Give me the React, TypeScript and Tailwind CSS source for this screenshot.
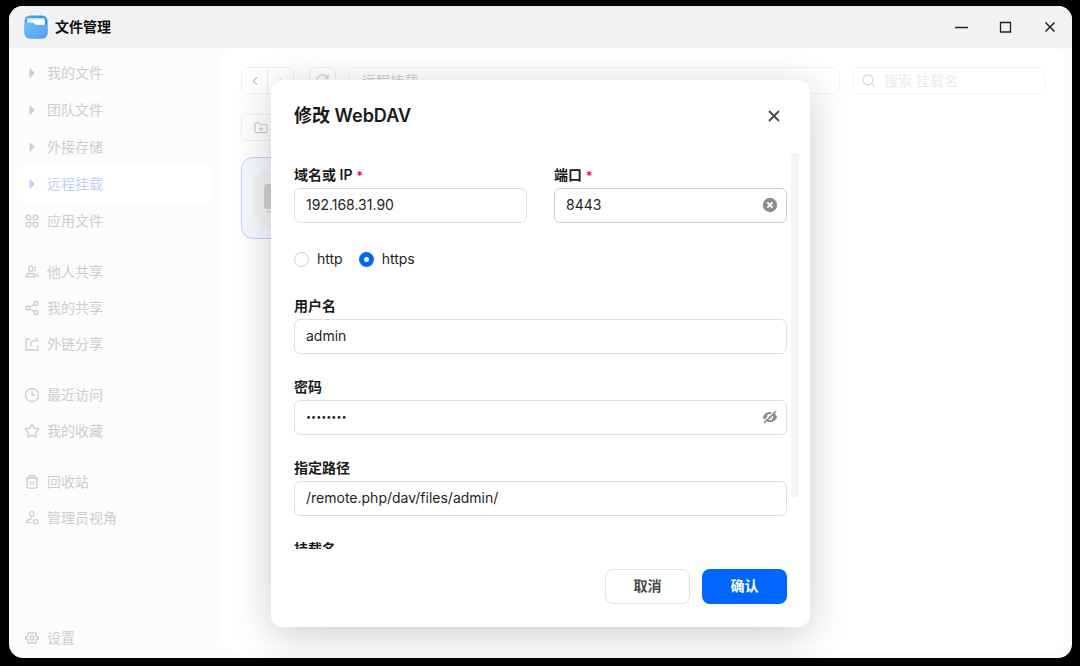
import React, { useState } from 'react';
import { ChevronLeft, ChevronRight, FolderPlus, RotateCw, Search, Star, X } from 'lucide-react';

interface NavItem {
    id: string;
    label: string;
    icon: React.ReactNode;
}

interface FieldProps {
    id: string;
    label: string;
    value: string;
    onChange: (value: string) => void;
    type?: string;
    required?: boolean;
    active?: boolean;
    suffix?: React.ReactNode;
}

const Line: React.FC<{ children: React.ReactNode }> = ({ children }) => (
    <svg width="16" height="16" viewBox="0 0 16 16" fill="none" stroke="currentColor" strokeWidth="1.3" className="shrink-0" aria-hidden="true">
        {children}
    </svg>
);

const Caret = () => (
    <svg width="16" height="16" viewBox="0 0 16 16" fill="currentColor" className="shrink-0" aria-hidden="true">
        <path d="M5.500 3.900c0-.5.5-.6.8-.3l4 4c.3.300.3.600 0 .9l-4 4c-.3.3-.8.2-.8-.3z" />
    </svg>
);

const AppLogo = () => (
    <svg width="24" height="24" viewBox="0 0 24 24" className="shrink-0" aria-hidden="true">
        <defs>
            <linearGradient id="logo-back" x1="0" y1="0" x2="1" y2="0">
                <stop offset="0" stopColor="#38b0fb" />
                <stop offset="1" stopColor="#2a8df0" />
            </linearGradient>
            <linearGradient id="logo-front" x1="0" y1="0" x2="1" y2="1">
                <stop offset="0" stopColor="#6cc0fb" />
                <stop offset="1" stopColor="#559bf0" />
            </linearGradient>
        </defs>
        <rect x="0.5" y="0.5" width="23" height="23" rx="5.5" fill="url(#logo-back)" />
        <path d="M3 4.6c0-1 .6-1.600 1.600-1.600h14.800c1 0 1.600.600 1.600 1.600V12H3z" fill="#bfe3fd" />
        <path d="M3.400 6c0-.8.500-1.200 1.200-1.200h15c.7 0 1.200.4 1.200 1.200v6H3.400z" fill="#fff" />
        <path d="M.5 8.600c0-.8.500-1.200 1.200-1.200h7c1.500 0 1.900 2.300 3.600 2.300h9.900c.8 0 1.300.4 1.300 1.200V18a5.500 5.500 0 0 1-5.500 5.500H6A5.500 5.500 0 0 1 .5 18z" fill="url(#logo-front)" />
    </svg>
);

const navGroups: NavItem[][] = [
    [
        { id: 'mine', label: '我的文件', icon: <Caret /> },
        { id: 'team', label: '团队文件', icon: <Caret /> },
        { id: 'external', label: '外接存储', icon: <Caret /> },
        { id: 'remote', label: '远程挂载', icon: <Caret /> },
        {
            id: 'apps',
            label: '应用文件',
            icon: (
                <Line>
                    <path d="M6.700 6.700H4.400a2.300 2.300 0 1 1 2.300-2.300zM9.300 6.700h2.300a2.300 2.300 0 1 0-2.300-2.300zM6.700 9.300H4.400a2.300 2.300 0 1 0 2.300 2.300zM9.300 9.300h2.300a2.300 2.300 0 1 1-2.300 2.300z" />
                </Line>
            )
        }
    ],
    [
        {
            id: 'others',
            label: '他人共享',
            icon: (
                <Line>
                    <ellipse cx="6.700" cy="4.800" rx="2.200" ry="2.600" />
                    <path d="M10 2.400c1.800.6 1.800 4.200 0 4.800M2 12.900c0-2.400 1.900-3.400 4.700-3.400s4.700 1 4.700 3.400zM12 9.800c1.400.5 2 1.500 2.100 3.100" />
                </Line>
            )
        },
        {
            id: 'my-share',
            label: '我的共享',
            icon: (
                <Line>
                    <circle cx="3.700" cy="8" r="2" />
                    <circle cx="11.800" cy="3.500" r="2" />
                    <circle cx="11.800" cy="12.500" r="2" />
                    <path d="m5.500 7 4.500-2.500M5.500 9l4.500 2.500" />
                </Line>
            )
        },
        {
            id: 'link-share',
            label: '外链分享',
            icon: (
                <Line>
                    <path d="M6 3H2v11h12V9M6.800 10V7.500c0-1.700 1-2.700 2.700-2.700H14M11.200 2 14 4.800" />
                </Line>
            )
        }
    ],
    [
        {
            id: 'recent',
            label: '最近访问',
            icon: (
                <Line>
                    <circle cx="8" cy="8" r="6.500" />
                    <path d="M8 4v4h3" />
                </Line>
            )
        },
        { id: 'favorite', label: '我的收藏', icon: <Star size={16} strokeWidth={1.9} className="shrink-0" /> }
    ],
    [
        {
            id: 'trash',
            label: '回收站',
            icon: (
                <Line>
                    <path d="M1.800 4h12.400M5.200 4V1.600h5.600V4M3.200 4v8.700c0 .9.500 1.400 1.400 1.400h6.800c.9 0 1.400-.5 1.400-1.400V4M6.600 7v4M9.400 7v4" />
                </Line>
            )
        },
        {
            id: 'admin',
            label: '管理员视角',
            icon: (
                <Line>
                    <ellipse cx="7.800" cy="4" rx="2" ry="2.600" />
                    <path d="M7.800 9c-3.300 0-5.200 1.200-5.400 3.700h5.200" />
                    <circle cx="11.700" cy="11.500" r="2.200" />
                </Line>
            )
        }
    ]
];

const Field: React.FC<FieldProps> = ({ id, label, value, onChange, type = 'text', required, active, suffix }) => (
    <div className="flex min-w-0 flex-1 flex-col gap-[3px]">
        <label htmlFor={id} className="text-sm leading-5 font-semibold text-[#1a1a1a]">
            {label}
            {required && <span className="ml-1 align-middle text-xs leading-none text-[#f5002d]">*</span>}
        </label>
        <div className={`flex h-[35px] items-center rounded-md border pr-2 pl-[11px] ${active ? 'border-[#cacaca]' : 'border-[#dedede]'}`}>
            <input
                id={id}
                type={type}
                value={value}
                onChange={(e) => onChange(e.target.value)}
                className={`min-w-0 flex-1 bg-transparent text-[#1f1f1f] outline-none ${type === 'password' ? 'text-[9px]' : 'text-sm'}`}
            />
            {suffix}
        </div>
    </div>
);

const App: React.FC = () => {
    const [host, setHost] = useState('192.168.31.90');
    const [port, setPort] = useState('8443');
    const [protocol, setProtocol] = useState('https');
    const [user, setUser] = useState('admin');
    const [password, setPassword] = useState('password');
    const [showPassword, setShowPassword] = useState(false);
    const [path, setPath] = useState('/remote.php/dav/files/admin/');
    const [mountName, setMountName] = useState('');

    return (
        <div className="flex h-screen flex-col bg-black pt-[6px] pr-2 pb-2 pl-[9px] font-['Inter','Noto_Sans_CJK_SC',sans-serif] text-sm">
            <div className="flex min-h-0 flex-1 flex-col overflow-hidden rounded-[14px] bg-[#fcfcfc]">
                {/* Шапка окна */}
                <header className="flex h-[42px] shrink-0 items-center justify-between bg-[#f1f2f4] pr-[14px] pl-[15px]">
                    <div className="flex items-center gap-[7px]">
                        <AppLogo />
                        <h1 className="font-semibold text-[#111]">文件管理</h1>
                    </div>
                    <div className="flex items-center gap-7 text-[#222]">
                        <button aria-label="最小化">
                            <svg width="16" height="16" viewBox="0 0 16 16" stroke="currentColor" strokeWidth="1.300"><path d="M1 8.500h13" /></svg>
                        </button>
                        <button aria-label="最大化">
                            <svg width="16" height="16" viewBox="0 0 16 16" fill="none" stroke="currentColor" strokeWidth="1.300"><path d="M2.500 3.500h10v9.500h-10z" /></svg>
                        </button>
                        <button aria-label="关闭">
                            <svg width="16" height="16" viewBox="0 0 16 16" stroke="currentColor" strokeWidth="1.500"><path d="m3.500 3.500 9 9M12.500 3.500l-9 9" /></svg>
                        </button>
                    </div>
                </header>

                <div className="relative flex min-h-0 flex-1">
                    {/* Боковое меню */}
                    <aside className="flex w-[212px] shrink-0 flex-col text-[#cdcdcd]">
                        <nav className="flex min-h-0 flex-1 flex-col gap-[15px] overflow-hidden px-2 pt-[7px]">
                            {navGroups.map((group, idx) => (
                                <div key={idx} className={`flex flex-col ${idx === 0 ? 'gap-px' : ''}`}>
                                    {group.map((item) => (
                                        <button
                                            key={item.id}
                                            className={`flex h-9 items-center gap-[7px] rounded-md px-[7px] text-left ${
                                                item.id === 'remote' ? 'bg-white text-[#c0cfff]' : ''
                                            }`}
                                        >
                                            {item.icon}
                                            <span>{item.label}</span>
                                        </button>
                                    ))}
                                </div>
                            ))}
                        </nav>
                        <div className="shrink-0 border-t border-[#f7f7f7] px-2 pb-[2px]">
                            <button className="flex h-9 w-full items-center gap-[7px] px-[7px] text-left">
                                <Line>
                                    <path d="M5.900 2.300 7 3.300h2l1.100-1 1.900 1.100-.3 1.500 1 1.700 1.500.4v2l-1.500.4-1 1.700.3 1.500-1.900 1.100-1.100-1H7l-1.100 1L4 12.600l.3-1.500-1-1.700L1.800 9V7l1.500-.4 1-1.700L4 3.400z" strokeLinejoin="round" />
                                    <circle cx="8" cy="8" r="1.900" />
                                </Line>
                                <span>设置</span>
                            </button>
                        </div>
                    </aside>

                    {/* Содержимое */}
                    <main className="mr-[7px] mb-2 flex min-w-0 flex-1 flex-col rounded-xl bg-white px-5 pt-[19px] text-[#cfcfcf]">
                        <div className="flex h-[27px] items-stretch gap-3">
                            <div className="flex w-[53px] rounded-md border border-[#f0f0f0]">
                                <button aria-label="后退" className="flex flex-1 items-center justify-center border-r border-[#f0f0f0]">
                                    <ChevronLeft size={14} className="text-[#c4c4c4]" />
                                </button>
                                <button aria-label="前进" className="flex flex-1 items-center justify-center">
                                    <ChevronRight size={14} className="text-[#ececec]" />
                                </button>
                            </div>
                            <button aria-label="刷新" className="ml-[3px] flex w-[27px] items-center justify-center rounded-md border border-[#f0f0f0]">
                                <RotateCw size={15} strokeWidth={1.8} />
                            </button>
                            <div className="flex min-w-0 flex-1 items-center rounded-md border border-[#f3f3f3] px-[13px]">远程挂载</div>
                            <label className="flex w-[193px] items-center gap-2 rounded-md border border-[#f3f3f3] px-2">
                                <Search size={15} strokeWidth={1.800} className="shrink-0 text-[#d4d4d4]" />
                                <input aria-label="搜索" placeholder="搜索 挂载名" className="min-w-0 flex-1 bg-transparent outline-none placeholder:text-[#ebebeb]" />
                            </label>
                        </div>
                        <button aria-label="添加挂载" className="mt-5 flex h-[27px] items-center self-start rounded-md border border-[#f0f0f0] px-3">
                            <FolderPlus size={14} />
                        </button>
                        <div className="mt-4 flex h-[82px] w-60 items-center rounded-xl border border-[#c4d3ff] bg-[#f5f8ff] px-3">
                            <div className="flex h-14 w-14 items-center justify-center rounded-xl bg-[#f3f4f6]">
                                <svg width="36" height="36" viewBox="0 0 36 36" fill="#d2d2d2" aria-hidden="true">
                                    <path fillRule="evenodd" d="M3 4h30a3 3 0 0 1 3 3v19a3 3 0 0 1-3 3H3a3 3 0 0 1-3-3V7a3 3 0 0 1 3-3zm4 5v16h23V9zM3 31h30v1H3z" />
                                </svg>
                            </div>
                        </div>
                    </main>

                    {/* Диалог */}
                    <div className="absolute inset-0 flex items-center justify-center">
                        <form
                            role="dialog"
                            aria-labelledby="dialog-title"
                            onSubmit={(e) => e.preventDefault()}
                            className="flex max-h-full w-full max-w-[539px] flex-col rounded-xl bg-white shadow-[0_8px_40px_rgba(0,0,0,0.2)]"
                        >
                            <div className="flex h-[72px] shrink-0 items-center justify-between px-[23px]">
                                <h2 id="dialog-title" className="text-lg font-semibold text-[#1a1a1a]">修改 WebDAV</h2>
                                <button type="button" aria-label="关闭对话框" className="mr-1 text-[#4a4a4a]">
                                    <X size={18} strokeWidth={2.500} />
                                </button>
                            </div>

                            <div className="relative flex min-h-0 flex-col">
                                <div className="flex max-h-[397px] flex-col gap-[23px] overflow-y-auto px-[23px] pt-[13px] [scrollbar-width:none]">
                                    <div className="flex gap-[27px]">
                                        <Field id="host" label="域名或 IP" value={host} onChange={setHost} required />
                                        <Field
                                            id="port"
                                            label="端口"
                                            value={port}
                                            onChange={setPort}
                                            required
                                            active
                                            suffix={
                                                <button type="button" aria-label="清空" onClick={() => setPort('')}>
                                                    <svg width="16" height="16" viewBox="0 0 16 16">
                                                        <circle cx="8" cy="8" r="7.200" fill="#8c8c8c" />
                                                        <path d="m5.400 5.400 5.200 5.200M10.600 5.400l-5.200 5.200" stroke="#fff" strokeWidth="2" />
                                                    </svg>
                                                </button>
                                            }
                                        />
                                    </div>

                                    <div className="flex h-[27px] shrink-0 items-center gap-4">
                                        {['http', 'https'].map((name) => (
                                            <label key={name} className="flex items-center gap-2 text-[#1f1f1f]">
                                                <input
                                                    type="radio"
                                                    name="protocol"
                                                    checked={protocol === name}
                                                    onChange={() => setProtocol(name)}
                                                    className="h-[15px] w-[15px] appearance-none rounded-full border border-[#cfcfcf] bg-white checked:border-[5px] checked:border-[#0066ff]"
                                                />
                                                {name}
                                            </label>
                                        ))}
                                    </div>

                                    <Field id="user" label="用户名" value={user} onChange={setUser} />
                                    <Field
                                        id="password"
                                        label="密码"
                                        type={showPassword ? 'text' : 'password'}
                                        value={password}
                                        onChange={setPassword}
                                        suffix={
                                            <button type="button" aria-label="显示密码" onClick={() => setShowPassword(!showPassword)}>
                                                <svg width="16" height="16" viewBox="0 0 16 16" fill="none">
                                                    <path d="M.8 8C2.200 4.700 4.800 2.900 8 2.900s5.800 1.800 7.200 5.100c-1.400 3.300-4 5.100-7.200 5.100S2.200 11.300.8 8z" fill="#8c8c8c" />
                                                    <circle cx="8" cy="8" r="3.100" fill="#fff" />
                                                    <circle cx="8" cy="8" r="1.700" fill="#8c8c8c" />
                                                    <path d="M1.200 12.900 13.500.9" stroke="#fff" strokeWidth="1.400" />
                                                    <path d="M2 14 14.200 2" stroke="#8c8c8c" strokeWidth="1.400" />
                                                </svg>
                                            </button>
                                        }
                                    />
                                    <Field id="path" label="指定路径" value={path} onChange={setPath} />
                                    <Field id="mount-name" label="挂载名" value={mountName} onChange={setMountName} />
                                </div>
                                <div className="absolute top-px right-[11px] h-[345px] w-2 rounded-full bg-[#f4f4f4]" />
                            </div>

                            <div className="flex shrink-0 justify-end gap-3 px-[23px] pt-5 pb-[23px]">
                                <button type="button" className="h-[35px] w-[85px] rounded-lg border border-[#e2e2e2] font-semibold text-[#4a4a4a]">取消</button>
                                <button type="submit" className="h-[35px] w-[85px] rounded-lg bg-[#0066ff] font-semibold text-white">确认</button>
                            </div>
                        </form>
                    </div>
                </div>
            </div>
        </div>
    );
};

export default App;
